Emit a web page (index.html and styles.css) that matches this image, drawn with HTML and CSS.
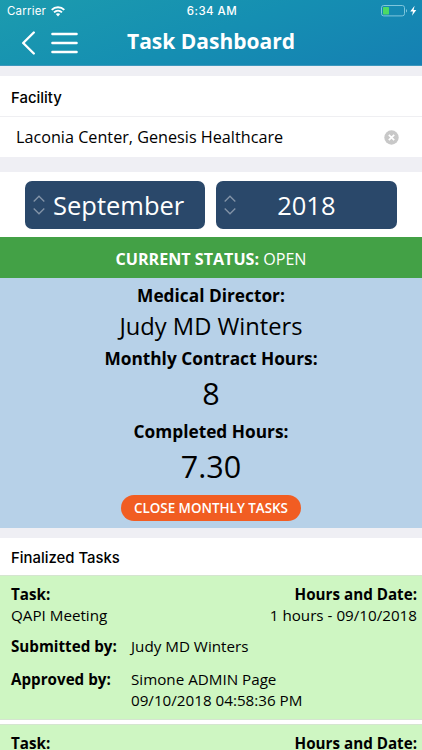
FILE: index.html
```html
<!DOCTYPE html>
<html lang="en">
<head>
    <meta charset="UTF-8">
    <meta name="viewport" content="width=device-width, initial-scale=1.0">
    <title>Task Dashboard</title>
    <link rel="stylesheet" href="styles.css">
</head>
<body>

    <header class="header">
        <div class="status-bar">
            <div class="carrier">
                <span>Carrier</span>
                <svg width="14" height="11" viewBox="0 0 14 11" fill="none" stroke="#fff" stroke-width="1.9">
                    <path d="M0.7 3.9C4.2 0.4 9.8 0.4 13.3 3.9"/>
                    <path d="M3 6.4C5.3 4.2 8.7 4.2 11 6.4"/>
                    <path d="M7 10.4L4.8 8.1C6 7 8 7 9.2 8.1Z" fill="#fff" stroke="none"/>
                </svg>
            </div>
            <div class="clock">6:34 AM</div>
            <div class="battery">
                <svg width="36" height="12" viewBox="0 0 36 12">
                    <rect x="0.5" y="0.5" width="23" height="10.4" rx="2.2" fill="none" stroke="#7fc6dc"/>
                    <rect x="2" y="2" width="6" height="7.4" rx="0.6" fill="#4cd964"/>
                    <path d="M25 4C26.4 4.4 26.4 7.2 25 7.6Z" fill="#7fc6dc"/>
                    <path d="M33.6 0.8L29.2 6.4H32L31 10.7L35.3 5H32.6Z" fill="#fff"/>
                </svg>
            </div>
        </div>
        <div class="nav-bar">
            <div class="nav-icons">
                <svg width="14" height="24" viewBox="0 0 14 24" fill="none" stroke="#fff" stroke-width="2.4" stroke-linecap="round" stroke-linejoin="round">
                    <path d="M12.8 1.5L2.2 12L12.8 22.5"/>
                </svg>
                <svg width="28" height="24" viewBox="0 0 28 24" fill="none" stroke="#fff" stroke-width="2.4" stroke-linecap="round">
                    <path d="M2.4 3H26.6M2.4 12H26.6M2.4 21H26.6"/>
                </svg>
            </div>
            <h1>Task Dashboard</h1>
        </div>
    </header>

    <section class="facility">
        <h2 class="section-title">Facility</h2>
        <div class="facility-row">
            <span>Laconia Center, Genesis Healthcare</span>
            <svg width="15" height="15" viewBox="0 0 15 15">
                <circle cx="7.5" cy="7.5" r="7.2" fill="#c8c8c8"/>
                <path d="M4.8 4.8L10.2 10.2M10.2 4.8L4.8 10.2" stroke="#fff" stroke-width="1.7"/>
            </svg>
        </div>
    </section>

    <section class="period">
        <button class="picker month">
            <svg width="12" height="20" viewBox="0 0 12 20" fill="none" stroke="#8494a8" stroke-width="1.3">
                <path d="M0.7 6.5L6 1.2L11.3 6.5M0.7 13.5L6 18.8L11.3 13.5"/>
            </svg>
            <span>September</span>
        </button>
        <button class="picker year">
            <svg width="12" height="20" viewBox="0 0 12 20" fill="none" stroke="#8494a8" stroke-width="1.3">
                <path d="M0.7 6.5L6 1.2L11.3 6.5M0.7 13.5L6 18.8L11.3 13.5"/>
            </svg>
            <span>2018</span>
        </button>
    </section>

    <div class="current-status"><strong>CURRENT STATUS:</strong> OPEN</div>

    <section class="summary">
        <div class="label">Medical Director:</div>
        <div class="director">Judy MD Winters</div>
        <div class="label">Monthly Contract Hours:</div>
        <div class="hours">8</div>
        <div class="label">Completed Hours:</div>
        <div class="hours">7.30</div>
        <button class="close-button">CLOSE MONTHLY TASKS</button>
    </section>

    <section class="finalized">
        <h2 class="section-title">Finalized Tasks</h2>
        <div class="task">
            <div class="task-top">
                <div><strong>Task:</strong><br>QAPI Meeting</div>
                <div class="task-date"><strong>Hours and Date:</strong><br>1 hours - 09/10/2018</div>
            </div>
            <div class="task-row"><strong>Submitted by:</strong><span>Judy MD Winters</span></div>
            <div class="task-row"><strong>Approved by:</strong><span>Simone ADMIN Page<br>09/10/2018 04:58:36 PM</span></div>
        </div>
        <div class="task">
            <div class="task-top">
                <div><strong>Task:</strong></div>
                <div class="task-date"><strong>Hours and Date:</strong></div>
            </div>
        </div>
    </section>

</body>
</html>
```
FILE: styles.css
```css
* {
    box-sizing: border-box;
}
body {
    font-family: "Open Sans", sans-serif;
    background-color: #efeff4;
    color: #000;
    margin: 0;
    height: 750px;
    overflow: hidden;
}
h1, h2 {
    margin: 0;
}
strong {
    font-weight: 700;
}
button {
    border: none;
    padding: 0;
    font-family: inherit;
    color: white;
}
svg {
    display: block;
    flex: none;
}
.header {
    height: 66px;
    color: white;
    background: linear-gradient(160deg, #1c9bae 0%, #158fb2 50%, #1580b3 100%);
    border-bottom: 1px solid #3d97bd;
}
.status-bar {
    display: grid;
    grid-template-columns: 1fr auto 1fr;
    align-items: center;
    height: 22px;
    padding: 0 5px 0 7px;
    font-family: Inter, sans-serif;
    font-size: 11.5px;
}
.carrier {
    display: flex;
    align-items: center;
    gap: 5px;
    letter-spacing: 0.2px;
}
.clock {
    font-weight: 500;
    letter-spacing: 0.45px;
}
.battery {
    justify-self: end;
}
.nav-bar {
    display: grid;
    grid-template-columns: 1fr auto 1fr;
    align-items: center;
    height: 42px;
}
.nav-icons {
    display: flex;
    gap: 15px;
    padding-left: 21px;
}
.nav-bar h1 {
    padding-bottom: 4px;
    font-size: 21px;
    font-weight: 700;
    line-height: 38px;
}
.facility {
    margin-top: 10px;
    background: white;
}
.section-title {
    height: 40px;
    padding-left: 11px;
    font-family: Inter, sans-serif;
    font-size: 14.9px;
    font-weight: 500;
    line-height: 44px;
}
.facility-row {
    display: flex;
    align-items: center;
    justify-content: space-between;
    height: 41px;
    padding: 0 23px 0 16px;
    border-top: 1px solid #efeff2;
    font-size: 16.2px;
}
.period {
    display: grid;
    grid-template-columns: 1fr 1fr;
    gap: 11px;
    height: 65px;
    margin-top: 15px;
    padding: 9px 25.5px 8px 25px;
    background: white;
}
.picker {
    display: flex;
    align-items: center;
    padding: 0 8px;
    border-radius: 7px;
    background: #2a486a;
    font-size: 25.5px;
    font-weight: 370;
}
.picker span {
    flex: 1;
    text-align: center;
}
.month {
    padding-right: 13px;
}
.year {
    padding-right: 20px;
}
.current-status {
    height: 41px;
    background: #43a146;
    color: white;
    font-size: 16.1px;
    font-weight: 370;
    line-height: 44px;
    text-align: center;
}
.summary {
    height: 250px;
    padding-top: 6px;
    background: #b7d1e8;
    text-align: center;
}
.label {
    font-size: 17.3px;
    font-weight: 700;
    line-height: 24px;
}
.director {
    padding-bottom: 3px;
    font-size: 23.7px;
    font-weight: 370;
    line-height: 36px;
}
.hours {
    padding-bottom: 4px;
    font-size: 30.5px;
    line-height: 45px;
}
.close-button {
    width: 180px;
    height: 26px;
    margin-top: 2px;
    border-radius: 13px;
    background: #f15d22;
    font-size: 13.4px;
    font-weight: 600;
    line-height: 26px;
}
.finalized {
    margin-top: 10px;
    background: white;
}
.finalized .section-title {
    height: 37px;
    line-height: 40px;
}
.task {
    height: 145px;
    margin-bottom: 4px;
    padding: 8px 5px 0 11px;
    background: #cef6c2;
    border-top: 1px solid #d5e5d0;
    border-bottom: 1px solid #d5e5d0;
    font-size: 15.2px;
    line-height: 21px;
}
.task-top {
    display: flex;
    justify-content: space-between;
}
.task-date {
    text-align: right;
}
.task-row {
    display: flex;
    margin: 10px 0 12px;
}
.task-row strong {
    width: 120px;
}
```
